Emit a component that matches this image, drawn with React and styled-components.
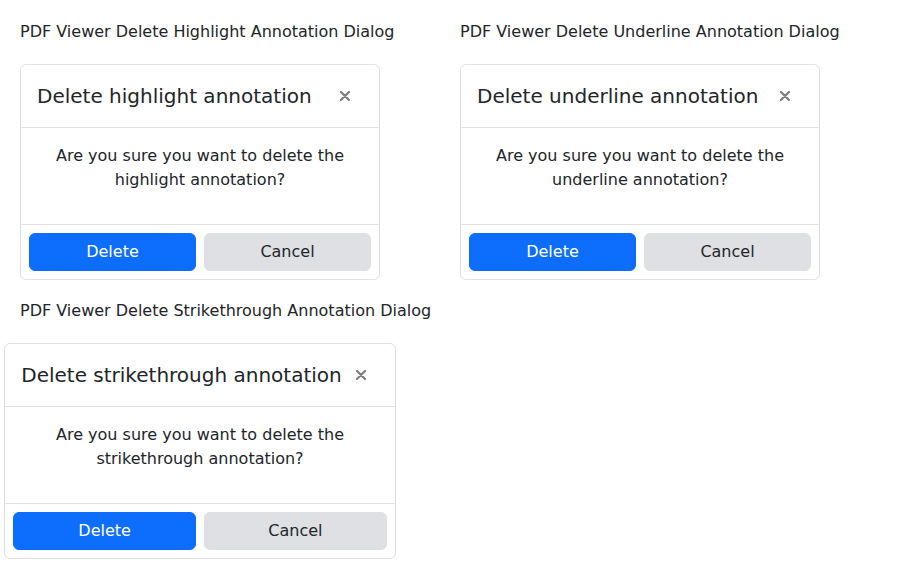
import React from "react";
import styled, { createGlobalStyle } from "styled-components";

const GlobalStyle = createGlobalStyle`
  body {
    margin: 0;
    background: #fff;
    font-family: "DejaVu Sans", "Liberation Sans", sans-serif;
    color: #212529;
  }
`;

const Page = styled.div`
  display: grid;
  grid-template-columns: 360px 360px;
  column-gap: 80px;
  row-gap: 19px;
  padding: 20px;
`;

const Section = styled.section`
  display: flex;
  flex-direction: column;
`;

const Label = styled.div`
  font-size: 16px;
  line-height: 24px;
  margin-bottom: 20px;
  white-space: nowrap;
`;

const Holder = styled.div`
  display: flex;
  justify-content: center;
`;

const Card = styled.div`
  flex: none;
  width: min-content;
  min-width: 360px;
  box-sizing: border-box;
  border: 1px solid #dee2e6;
  border-radius: 6px;
  background: #fff;
`;

const Header = styled.div`
  display: flex;
  align-items: center;
  padding: 16px 15px 16px 16px;
  border-bottom: 1px solid #dee2e6;
`;

const Title = styled.h5`
  margin: 0;
  font-size: 20px;
  font-weight: 400;
  line-height: 30px;
  white-space: nowrap;
`;

const Close = styled.button`
  margin-left: auto;
  flex: none;
  width: 38px;
  height: 30px;
  padding: 0;
  border: 0;
  background: transparent;
  display: flex;
  align-items: center;
  justify-content: center;
  cursor: pointer;
  svg {
    opacity: 0.5;
  }
`;

const Body = styled.div`
  padding: 16px;
  text-align: center;
  p {
    margin: 0 0 16px;
    font-size: 16px;
    line-height: 24px;
  }
`;

const Footer = styled.div`
  display: flex;
  gap: 8px;
  padding: 8px;
  border-top: 1px solid #dee2e6;
`;

const Button = styled.button`
  flex: 1;
  height: 38px;
  border: 1px solid ${(p) => (p.$primary ? "#0d6efd" : "#dee0e4")};
  border-radius: 6px;
  background: ${(p) => (p.$primary ? "#0d6efd" : "#dee0e4")};
  color: ${(p) => (p.$primary ? "#fff" : "#212529")};
  font-family: inherit;
  font-size: 16px;
  line-height: 24px;
  cursor: pointer;
`;

const CloseIcon = () => (
  <svg width="10" height="10" viewBox="0 0 10 10">
    <path d="M1 1L9 9M9 1L1 9" stroke="#000" strokeWidth="2.2" strokeLinecap="round" />
  </svg>
);

const dialogs = [
  { label: "Highlight", kind: "highlight" },
  { label: "Underline", kind: "underline" },
  { label: "Strikethrough", kind: "strikethrough" },
];

function DeleteDialog({ label, kind }) {
  return (
    <Section>
      <Label>PDF Viewer Delete {label} Annotation Dialog</Label>
      <Holder>
        <Card>
          <Header>
            <Title>Delete {kind} annotation</Title>
            <Close aria-label="Close">
              <CloseIcon />
            </Close>
          </Header>
          <Body>
            <p>
              Are you sure you want to delete the {kind} annotation?
            </p>
          </Body>
          <Footer>
            <Button $primary>Delete</Button>
            <Button>Cancel</Button>
          </Footer>
        </Card>
      </Holder>
    </Section>
  );
}

export default function App() {
  return (
    <>
      <GlobalStyle />
      <Page>
        {dialogs.map((d) => (
          <DeleteDialog key={d.kind} {...d} />
        ))}
      </Page>
    </>
  );
}
